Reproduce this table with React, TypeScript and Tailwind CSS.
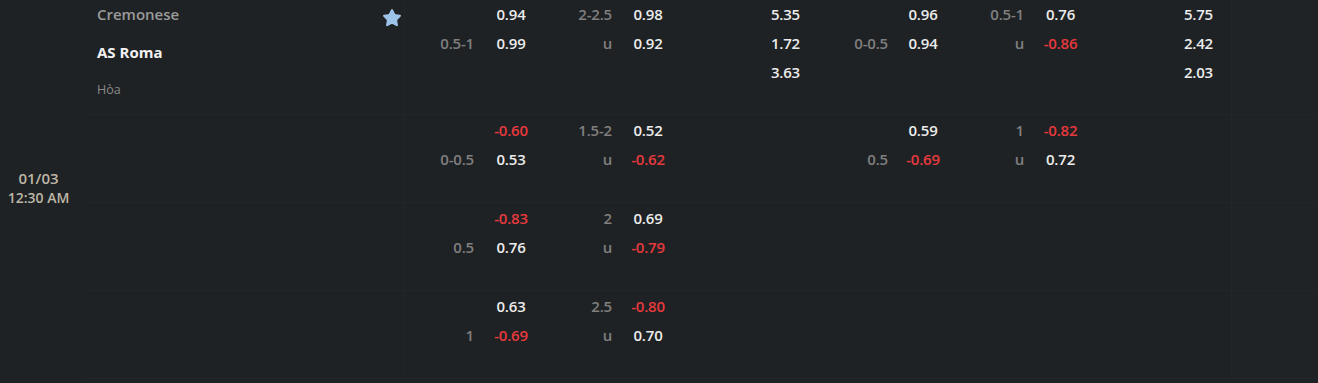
import React from "react";
import { Star } from "lucide-react";

type Market = { lines: string[]; odds: string[] };

type Block = {
  hdp?: Market;
  ou?: Market;
  x12?: string[];
  h1Hdp?: Market;
  h1Ou?: Market;
  h1X12?: string[];
};

const blocks: Block[] = [
  {
    hdp: { lines: ["", "0.5-1"], odds: ["0.94", "0.99"] },
    ou: { lines: ["2-2.5", "u"], odds: ["0.98", "0.92"] },
    x12: ["5.35", "1.72", "3.63"],
    h1Hdp: { lines: ["", "0-0.5"], odds: ["0.96", "0.94"] },
    h1Ou: { lines: ["0.5-1", "u"], odds: ["0.76", "-0.86"] },
    h1X12: ["5.75", "2.42", "2.03"],
  },
  {
    hdp: { lines: ["", "0-0.5"], odds: ["-0.60", "0.53"] },
    ou: { lines: ["1.5-2", "u"], odds: ["0.52", "-0.62"] },
    h1Hdp: { lines: ["", "0.5"], odds: ["0.59", "-0.69"] },
    h1Ou: { lines: ["1", "u"], odds: ["-0.82", "0.72"] },
  },
  {
    hdp: { lines: ["", "0.5"], odds: ["-0.83", "0.76"] },
    ou: { lines: ["2", "u"], odds: ["0.69", "-0.79"] },
  },
  {
    hdp: { lines: ["", "1"], odds: ["0.63", "-0.69"] },
    ou: { lines: ["2.5", "u"], odds: ["-0.80", "0.70"] },
  },
];

function Odd({ v }: { v?: string }) {
  if (!v) return null;
  const neg = v.startsWith("-");
  return <span className={neg ? "text-[#e6393e]" : "text-[#ececec]"}>{v}</span>;
}

function LineCol({ items, w }: { items?: string[]; w: string }) {
  return (
    <div className={`${w} flex flex-col text-right text-[#7f7f7f]`}>
      {[0, 1, 2].map((i) => (
        <div key={i} className="h-[29px] leading-[29px]">
          {items?.[i] ?? ""}
        </div>
      ))}
    </div>
  );
}

function OddsCol({ items, w, right = false }: { items?: string[]; w: string; right?: boolean }) {
  return (
    <div className={`${w} flex flex-col ${right ? "text-right" : "text-center"}`}>
      {[0, 1, 2].map((i) => (
        <div key={i} className="h-[29px] leading-[29px]">
          <Odd v={items?.[i]} />
        </div>
      ))}
    </div>
  );
}

function OddsBlock({ b }: { b: Block }) {
  return (
    <div className="flex text-[15px] font-semibold tracking-[-0.2px]">
      <LineCol items={b.hdp?.lines} w="w-[69px]" />
      <OddsCol items={b.hdp?.odds} w="w-[74px]" />
      <LineCol items={b.ou?.lines} w="w-[64px]" />
      <OddsCol items={b.ou?.odds} w="w-[72px]" />
      <OddsCol items={b.x12} w="w-[116px]" right />
      <LineCol items={b.h1Hdp?.lines} w="w-[88px]" />
      <OddsCol items={b.h1Hdp?.odds} w="w-[70px]" />
      <LineCol items={b.h1Ou?.lines} w="w-[66px]" />
      <OddsCol items={b.h1Ou?.odds} w="w-[73px]" />
      <OddsCol items={b.h1X12} w="w-[116px]" right />
    </div>
  );
}

export default function App() {
  return (
    <div
      className="w-[1318px] h-[383px] overflow-hidden bg-[#1f2224] flex"
      style={{ fontFamily: '"Open Sans", "Noto Sans", sans-serif' }}
    >
      {/* Date */}
      <div className="w-[85px] pr-[8px] h-[378px] flex flex-col items-center justify-center text-[#bdb6a6] font-semibold">
        <div className="text-[15px] leading-[20px] mt-[-2px]">01/03</div>
        <div className="text-[14px] leading-[20px]">12:30 AM</div>
      </div>

      {/* Match rows */}
      <div className="flex-1 flex flex-col">
        {blocks.map((b, i) => (
          <div
            key={i}
            className={`flex border-b border-[#232629] ${i === 0 ? "h-[115px]" : "h-[88px]"}`}
          >
            <div className="w-[320px] border-r border-[#232629] pl-[12px] pr-[2px]">
              {i === 0 ? (
                <div className="flex flex-col">
                  <div className="flex justify-between h-[29px] items-start">
                    <span className="text-[15px] leading-[29px] font-semibold text-[#9a9a9a]">
                      Cremonese
                    </span>
                    <Star
                      size={20}
                      className="mt-[8px] text-[#9dc4e8]"
                      fill="#9dc4e8"
                      strokeWidth={1.5}
                    />
                  </div>
                  <div className="mt-[9px] text-[15px] leading-[29px] font-bold text-[#f2f2f2]">
                    AS Roma
                  </div>
                  <div className="mt-[13px] text-[12.5px] leading-[20px] text-[#8a8a8a]">Hòa</div>
                </div>
              ) : null}
            </div>
            <div className={`w-[827px] border-r border-[#232629] ${i === 0 ? "" : "pt-[1px]"}`}>
              <OddsBlock b={b} />
            </div>
            <div className="flex-1 bg-[#202325]" />
          </div>
        ))}
      </div>
    </div>
  );
}
